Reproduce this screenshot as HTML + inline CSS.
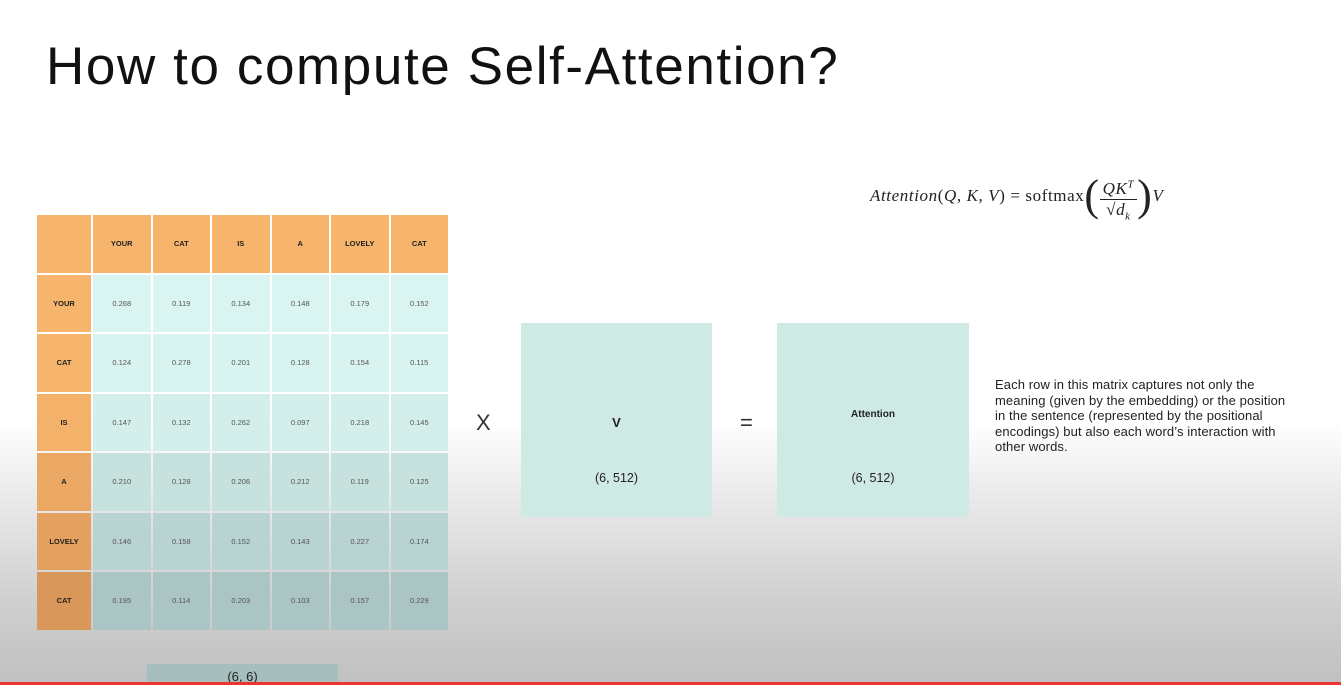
<!DOCTYPE html>
<html><head><style>
body{margin:0;width:1341px;height:685px;overflow:hidden;position:relative;font-family:"Liberation Sans",sans-serif;
background:linear-gradient(to bottom,#fff 0px,#fff 420px,#e9e9e9 500px,#d0d0d0 600px,#c0c0c0 685px);}
h1{position:absolute;left:46px;top:36px;margin:0;font-weight:normal;font-size:53px;color:#111;letter-spacing:1.6px}
table{position:absolute;left:35px;top:213px;border-collapse:separate;border-spacing:2px;}
td{width:57.5px;height:57.5px;text-align:center;font-size:7.5px;color:#555;padding:0;}
td.h{background:#f7b46c;color:#222;font-weight:bold}
td.h0{width:54px}
.box{position:absolute;background:#cdeae6;text-align:center;font-size:12.5px;color:#222}
</style></head><body>
<h1>How to compute Self-Attention?</h1>
<div style="position:absolute;left:870px;top:170px;font-family:'Liberation Serif',serif;font-size:17px;color:#222;white-space:nowrap;letter-spacing:0.6px">
<i>Attention</i>(<i>Q</i>, <i>K</i>, <i>V</i>) = softmax<span style="font-size:44px;vertical-align:-9px">(</span><span style="display:inline-block;vertical-align:-14px;text-align:center;font-size:17px"><span style="display:block;border-bottom:1px solid #222;padding:0 3px"><i>QK<sup style="font-size:11px">T</sup></i></span><span>√<i>d<sub style="font-size:11px">k</sub></i></span></span><span style="font-size:44px;vertical-align:-9px">)</span><i>V</i></div>
<table>
<tr><td class="h h0"></td><td class="h">YOUR</td><td class="h">CAT</td><td class="h">IS</td><td class="h">A</td><td class="h">LOVELY</td><td class="h">CAT</td></tr>
<tr><td class="h h0">YOUR</td><td style="background:#d9f4f1">0.268</td><td style="background:#d9f4f1">0.119</td><td style="background:#d9f4f1">0.134</td><td style="background:#d9f4f1">0.148</td><td style="background:#d9f4f1">0.179</td><td style="background:#d9f4f1">0.152</td></tr>
<tr><td class="h h0">CAT</td><td style="background:#d8f3f0">0.124</td><td style="background:#d8f3f0">0.278</td><td style="background:#d8f3f0">0.201</td><td style="background:#d8f3f0">0.128</td><td style="background:#d8f3f0">0.154</td><td style="background:#d8f3f0">0.115</td></tr>
<tr><td class="h h0" style="background:#f4b169">IS</td><td style="background:#d3eeeb">0.147</td><td style="background:#d3eeeb">0.132</td><td style="background:#d3eeeb">0.262</td><td style="background:#d3eeeb">0.097</td><td style="background:#d3eeeb">0.218</td><td style="background:#d3eeeb">0.145</td></tr>
<tr><td class="h h0" style="background:#eba865">A</td><td style="background:#c6e1de">0.210</td><td style="background:#c6e1de">0.128</td><td style="background:#c6e1de">0.206</td><td style="background:#c6e1de">0.212</td><td style="background:#c6e1de">0.119</td><td style="background:#c6e1de">0.125</td></tr>
<tr><td class="h h0" style="background:#e3a05f">LOVELY</td><td style="background:#b8d3d1">0.146</td><td style="background:#b8d3d1">0.158</td><td style="background:#b8d3d1">0.152</td><td style="background:#b8d3d1">0.143</td><td style="background:#b8d3d1">0.227</td><td style="background:#b8d3d1">0.174</td></tr>
<tr><td class="h h0" style="background:#d9975a">CAT</td><td style="background:#aac5c3">0.195</td><td style="background:#aac5c3">0.114</td><td style="background:#aac5c3">0.203</td><td style="background:#aac5c3">0.103</td><td style="background:#aac5c3">0.157</td><td style="background:#aac5c3">0.229</td></tr>
</table>
<div class="box" style="left:147px;top:664px;width:191px;height:21px;background:#a6bebd;font-size:13px;line-height:26px">(6, 6)</div>
<div style="position:absolute;left:476px;top:410px;font-size:22px;color:#333">X</div>
<div class="box" style="left:521px;top:323px;width:191px;height:194px;background:#cfe9e5"><div style="position:absolute;top:92px;width:100%;font-weight:bold;font-size:13px">V</div><div style="position:absolute;top:148px;width:100%">(6, 512)</div></div>
<div style="position:absolute;left:740px;top:410px;font-size:22px;color:#333">=</div>
<div class="box" style="left:777px;top:323px;width:192px;height:194px;background:#cfe9e5"><div style="position:absolute;top:86px;width:100%;font-weight:bold;font-size:10px">Attention</div><div style="position:absolute;top:148px;width:100%">(6, 512)</div></div>
<div style="position:absolute;left:995px;top:377px;width:338px;font-size:13px;line-height:15.5px;color:#222;letter-spacing:0.1px">Each row in this matrix captures not only the<br>meaning (given by the embedding) or the position<br>in the sentence (represented by the positional<br>encodings) but also each word’s interaction with<br>other words.</div>
<div style="position:absolute;left:0;top:682px;width:1341px;height:3px;background:#e33"></div>
</body></html>
